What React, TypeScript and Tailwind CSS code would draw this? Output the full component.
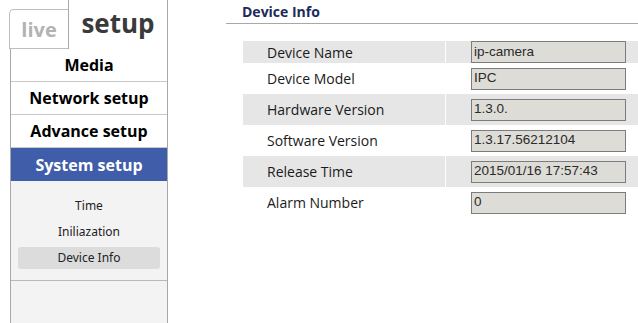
import React from "react";

const menu = ["Media", "Network setup", "Advance setup", "System setup"];
const subMenu = ["Time", "Iniliazation", "Device Info"];

const rows = [
  { label: "Device Name", value: "ip-camera" },
  { label: "Device Model", value: "IPC" },
  { label: "Hardware Version", value: "1.3.0." },
  { label: "Software Version", value: "1.3.17.56212104" },
  { label: "Release Time", value: "2015/01/16 17:57:43" },
  { label: "Alarm Number", value: "0" },
];

export default function App() {
  return (
    <div className="w-[638px] h-[323px] flex bg-white overflow-hidden font-['Open_Sans',sans-serif]">
      {/* Left navigation */}
      <div className="w-[168px] shrink-0 flex flex-col border-r border-[#a8a8a8]">
        <div className="h-[49px] flex items-end pl-[9px]">
          <div className="w-[59px] h-[40px] border-l border-t border-b border-[#bdbdbd] rounded-tl-[5px] flex items-center justify-center">
            <span className="text-[20px] font-bold text-[#b3b3b3] leading-none pt-[2px]">live</span>
          </div>
          <div className="flex-1 h-full border-l border-[#a8a8a8] flex items-center justify-center pb-[3px]">
            <span className="text-[26px] font-bold text-[#3a3a3a] leading-none">setup</span>
          </div>
        </div>

        <div className="flex-1 ml-[10px] border-l border-[#a8a8a8] flex flex-col">
          {menu.map((m) => (
            <div
              key={m}
              className={`h-[33px] flex items-center justify-center text-[16px] font-bold leading-none ${
                m === "System setup"
                  ? "bg-[#3f5da8] text-white"
                  : "border-b border-[#c8c8c8] text-black"
              }`}
            >
              {m}
            </div>
          ))}
          <div className="flex-1 bg-[#f3f3f3] flex flex-col">
            <div className="pt-[14px] pb-[11px] px-[7px] flex flex-col gap-[4px] border-b border-[#b8b8b8]">
              {subMenu.map((s) => (
                <div
                  key={s}
                  className={`h-[22px] rounded-[3px] flex items-center justify-center text-[12px] text-[#222] font-['Noto_Sans',sans-serif] ${
                    s === "Device Info" ? "bg-[#dcdcdc]" : ""
                  }`}
                >
                  {s}
                </div>
              ))}
            </div>
          </div>
        </div>
      </div>

      {/* Content */}
      <div className="flex-1 pl-[58px]">
        <div className="h-[24px] border-b border-[#a8a8a8] pl-[16px] flex items-center">
          <span className="text-[14px] font-bold text-[#1d2b5b] leading-none">Device Info</span>
        </div>
        <div className="mt-[17px] ml-[17px] flex flex-col">
          {rows.map((r, i) => (
            <div
              key={r.label}
              className={`flex items-center ${i === 0 ? "h-[22px]" : "h-[31px]"}`}
            >
              <div
                className={`w-[202px] h-full flex items-center pl-[24px] text-[14px] text-[#1a1a1a] ${
                  i % 2 === 0 ? "bg-[#e6e6e6]" : ""
                }`}
              >
                {r.label}
              </div>
              <div
                className={`ml-[1px] flex-1 h-full flex items-center pl-[25px] ${
                  i % 2 === 0 ? "bg-[#e6e6e6]" : ""
                }`}
              >
                <div className="w-[155px] h-[22px] border border-[#7c7c7c] bg-[#dedcd6] flex items-center pl-[2px] text-[13.5px] text-[#2a2a2a] font-['Liberation_Sans',sans-serif]">
                  {r.value}
                </div>
              </div>
            </div>
          ))}
        </div>
      </div>
    </div>
  );
}
